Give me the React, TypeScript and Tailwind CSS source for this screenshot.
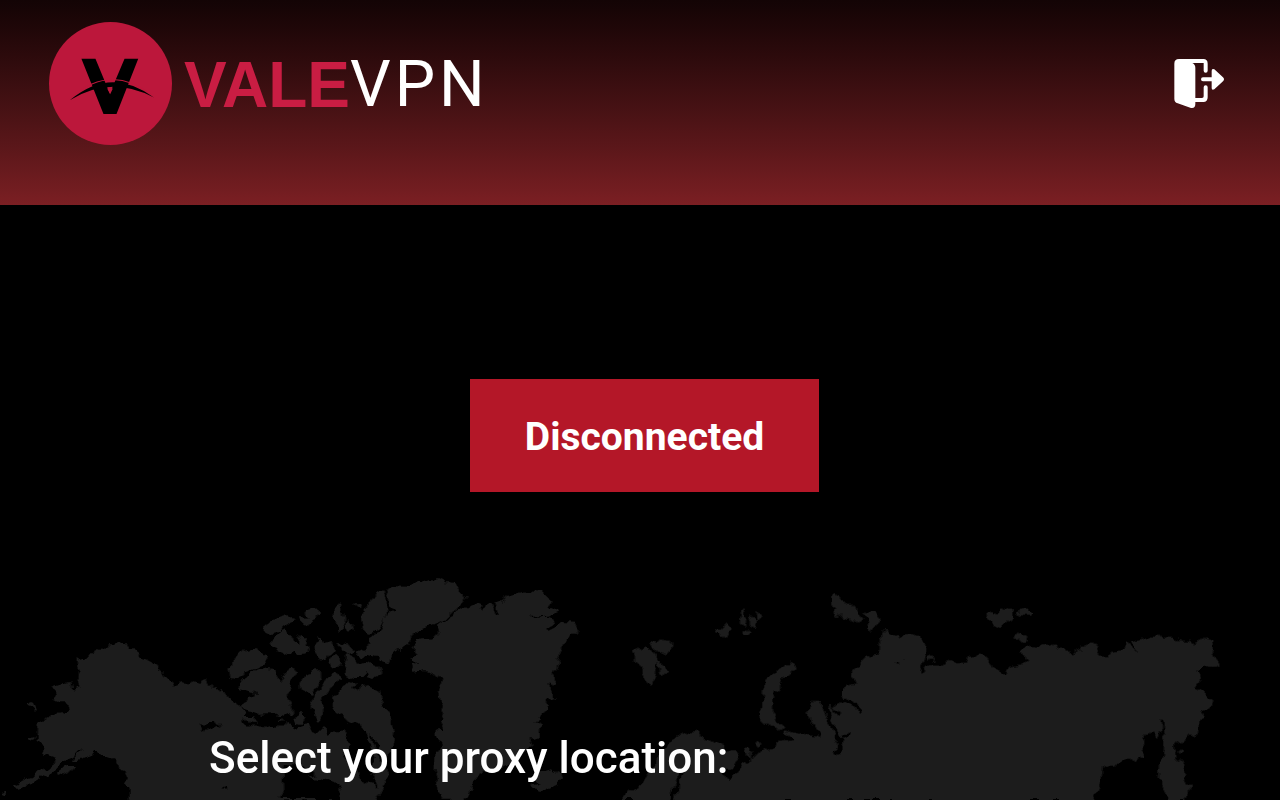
import React, { useState } from 'react';

const LogoMark: React.FC = () => (
    <svg viewBox="0 0 368 368" className="w-[123px] h-[123px] shrink-0" aria-hidden="true">
        <circle cx="184" cy="184" r="184" fill="#bc173b" />
        <path d="M97 110H139L182 214L226 110H267L202 275H163Z" fill="#000" />
        <path d="M66 226Q186 122 306 218" fill="none" stroke="#bc173b" strokeWidth="3" />
        <path d="M62 234Q186 130 314 226Q186 158 62 234Z" fill="#000" />
        <path d="M174 199H191L183 216Z" fill="#bc173b" />
    </svg>
);

const LogoutIcon: React.FC = () => (
    <svg viewBox="72 57 150 150" className="w-[50px] h-[50px]" fill="#fff" aria-hidden="true">
        <path d="M87 57H160Q173 57 173 71V92Q173 98 167 98Q161 98 161 92V69H127Q136 73 136 84V174H156Q161 174 161 169V142Q161 136 167 136Q173 136 173 142V172Q173 186 160 186H136V192Q136 206 123 204L83 190Q73 187 73 176V71Q73 57 87 57Z" />
        <path d="M159 112H185V93Q185 84 193 88L219 112Q225 118 219 124L193 148Q185 152 185 144V124H159Q153 124 153 118Q153 112 159 112Z" />
    </svg>
);

const WorldMap: React.FC = () => (
    <svg
        viewBox="0 0 3840 720"
        className="col-start-1 row-start-1 w-full"
        fill="#1c1c1c"
        stroke="#1c1c1c"
        strokeWidth="4"
        strokeLinejoin="round"
        aria-hidden="true"
    >
        {/* roughens the coastlines */}
        <filter id="coast" x="0" y="0" width="3840" height="720" filterUnits="userSpaceOnUse">
            <feTurbulence type="fractalNoise" baseFrequency="0.03" numOctaves="2" seed="4" result="noise" />
            <feDisplacementMap in="SourceGraphic" in2="noise" scale="32" xChannelSelector="R" yChannelSelector="G" />
        </filter>
        <g filter="url(#coast)">
            {/* Alaska and northern Canada */}
            <g transform="translate(0 180)">
                <path d="M40 498L75 480L110 468L140 445L172 418L150 410L128 402L137 378L112 365L113 322L130 305L155 283L185 282L208 268L203 248L180 248L160 237L172 220L161 203L185 192L212 188L218 208L240 200L235 180L242 165L233 135L232 118L250 112L280 110L300 92L330 80L350 74L370 78L386 71L400 88L412 100L410 112L435 120L450 137L480 150L500 170L515 182L522 200L545 192L570 197L580 189L600 194L610 186L625 182L635 200L630 210L648 206L652 220L670 212L690 240L715 258L735 275L728 290L760 290L775 310L790 313L815 330L850 300L890 325L925 315L945 345L980 310L1020 340L1080 280L1100 310L1120 380L1165 460L1175 545H845L860 500L895 475L950 460L905 440H845L850 545H392L390 505L375 495L382 475L370 450L355 430L330 410L300 402L285 388L270 402L240 418L215 425L262 375L240 388L218 410L185 425L160 455L130 472L95 490L50 502Z" />
                <path d="M178 460L200 444L216 442L205 455L182 466ZM88 250L98 248L108 270L96 260ZM86 357L102 354L98 361ZM4 520L18 514L10 524Z" />
                <path d="M590 307L650 306L665 322L640 330L625 325L605 340L610 322ZM662 510L680 500L690 508Z" fill="#050505" stroke="none" />
            </g>

            {/* Arctic archipelago */}
            <g transform="translate(630 30)">
                <path d="M60 323L54 292L85 265L105 240L135 235L148 248L165 257L168 278L130 295L100 303L85 325Z" />
                <path d="M92 352L105 322L150 295L190 303L205 338L225 310L245 295L262 302L240 338L230 380L245 425L225 438L200 434L178 430L150 432L120 420L92 410L115 382L145 378L135 365Z" />
                <path d="M160 175L185 155L240 140L248 150L215 175L200 185L170 187ZM175 220L205 190L225 180L245 195L250 220L262 222L275 190L285 200L280 220L298 235L295 250L270 254L250 240L225 256L200 245L205 232ZM272 155L268 140L298 142L292 125L320 118L325 135L305 145L285 165Z" />
                <path d="M270 340L290 310L328 302L330 325L318 345L305 375L290 370L275 360ZM335 355L350 325L375 308L395 325L370 340L355 365L335 385L340 430L320 450L300 410L315 375Z" />
                <path d="M375 120L385 108L400 130L405 155L395 180L380 180L380 150L368 145ZM315 220L325 205L345 220L370 215L375 240L350 262L340 272L328 255L320 240ZM415 150L430 160L432 180L415 190L408 170ZM390 215L410 220L430 245L415 255L395 240ZM360 270L375 260L388 272L385 288L368 290ZM435 102L447 101L445 110Z" />
                <path d="M400 290L410 258L430 265L440 280L470 275L500 290L512 310L495 325L465 318L440 320L415 308Z" />
                <path d="M455 155L460 115L485 95L500 65L520 70L522 100L530 120L525 145L505 175L480 190L462 185Z" />
                <path d="M535 85L530 60L560 48L600 50L625 35L655 38L680 26L705 38L735 40L765 80L760 98L735 120L690 150L640 170L610 190L590 220L550 248L535 275L505 265L480 262L440 250L470 238L490 220L480 205L515 180L535 130L565 118L540 105Z" />
                <path d="M365 390L380 370L405 350L420 335L445 350L430 375L448 350L475 348L505 360L510 390L520 410L545 440L555 480L548 540L525 560L510 530L490 500L470 470L450 455L425 460L405 440L380 425Z" />
                <path d="M255 440L275 430L290 445L280 460L262 458Z" />
            </g>
            <g transform="translate(630 30)" fill="#000" stroke="none">
                <path d="M400 470L440 450L470 490L490 560L480 600L500 650L470 640L440 600L400 560L420 520ZM340 420L370 440L375 470L350 495L335 470ZM210 690L222 650L265 615L330 625L385 640L395 690ZM500 690L540 600L560 560L660 560V690Z" />
            </g>

            {/* Greenland and Iceland */}
            <g transform="translate(1200 30)">
                <path d="M35 230L50 212L105 205L120 190L112 165L150 140L175 125L235 100L245 105L252 130L262 100L275 105L290 138L300 140L288 105L305 98L320 82L355 72L385 62L425 68L440 82L455 95L450 108L475 125L440 135L395 138L390 148L430 142L455 146L460 160L435 175L445 185L470 172L490 158L522 160L530 177L510 200L490 215L478 245L470 265L468 290L460 310L467 335L455 345L440 340L455 370L462 385L440 392L445 408L425 425L415 440L400 430L415 452L400 455L420 470L415 500L400 505L385 500L395 520L370 540L340 570L300 595L250 605L225 625L215 655L190 690H128L115 650L105 600L108 555L125 525L110 500L108 480L130 478L118 455L138 450L120 425L128 395L122 370L125 330L105 308L75 298L40 303L35 285L60 278L35 265L55 252Z" />
                <path d="M395 645L430 640L405 625L415 610L455 600L480 615L482 632L460 645L430 658L405 652Z" />
            </g>

            {/* Svalbard, Franz Josef Land, Novaya Zemlya, Scandinavia */}
            <g transform="translate(1860 60)">
                <path d="M38 212L50 205L65 210L75 198L90 212L112 240L105 270L95 312L82 300L68 280L65 260L45 245ZM92 185L112 190L120 180L150 184L162 190L155 210L135 222L115 215L98 205ZM115 240L130 255L135 270L150 272L142 282L125 285Z" />
                <path d="M285 155L292 145L308 146L322 135L330 145L320 165L308 170L300 158ZM358 130L362 95L366 90L370 115L380 125L375 135L360 138ZM395 120L402 112L412 125L405 142L393 138ZM412 97L420 95L425 108L415 118ZM368 155L380 144L390 152L378 160Z" />
                <path d="M632 50L645 40L665 60L680 78L710 80L725 118L715 125L690 120L665 105L650 112L642 100L648 90L634 80ZM736 95L760 98L780 118L765 130L752 150L742 130Z" />
                <path d="M498 262L515 242L528 260L515 275L490 295L470 325L458 355L457 400L470 425L488 440L470 447L440 435L422 420L428 390L430 330L440 300L460 280Z" />
                <path d="M5 660L45 630L75 600L100 560L130 510L160 478L190 460L210 465L235 462L245 475L280 485L310 500L340 515L350 540L335 565L310 565L300 590L325 605L345 590L370 560L385 540L405 535L425 515L450 505L480 490L525 485L520 475L490 450L530 458L560 465L605 478L575 430L568 400L575 365L605 365L615 400L635 440L655 470L660 520L640 525L670 515L672 480L640 425L625 380L645 400L640 380L665 360L680 370L715 400L722 390L665 345L670 330L715 310L695 290L700 270L745 225L780 220V660Z" />
                <path d="M375 505L390 505L398 520L380 535ZM408 490L415 478L425 488L415 498Z" />
            </g>

            {/* Siberia */}
            <g transform="translate(2460 60)">
                <path d="M98 285L120 255L150 222L175 220L185 200L182 160L195 148L208 160L230 165L240 180L250 165L270 162L295 172L310 185L320 210L310 245L300 285L315 278L320 262L340 252L365 252L390 245L410 258L440 255L445 230L480 226L500 236L520 265L555 288L565 262L610 255L620 240L605 215L620 200L665 202L680 192L700 195L715 208L730 213L755 213L762 225L780 217L805 216V660H75L60 520L72 480L90 470L70 460L55 480L40 420L30 380L60 400L45 375L70 360L110 390L118 400L118 382L80 355L65 340L85 320L120 312Z" />
                <path d="M498 98L510 92L530 100L542 86L560 95L575 90L580 108L562 120L540 142L520 135L500 115ZM595 97L620 90L637 96L630 105L605 104ZM582 172L595 160L615 170L610 178L588 180ZM325 230L335 226L340 236L328 240Z" />
                <path d="M222 255L235 248L240 256L230 264ZM244 234L256 230L256 240Z" fill="#000" />
            </g>
            <g transform="translate(3120 120)">
                <path d="M0 138L30 130L48 140L50 150L75 150L95 165L115 148L145 138L165 145L182 172L205 170L220 158L255 150L262 132L300 162L278 125L310 118L330 108L365 110L400 118L450 122L470 140L478 120L495 116L518 124L520 150L512 160L522 178L535 195L510 202L490 195L475 210L458 200L472 220L476 245L462 264L480 272L500 292L518 318L490 330L475 360L465 410L445 402L425 420L400 430L405 480L420 490L440 520L432 540L445 565L435 600H385L372 570L358 535L362 490L370 465L378 405L370 362L360 362L362 395L352 415L340 395L315 400L305 420L303 455L310 468L285 485L270 470L240 485L205 490L185 500L178 550L160 600H0Z" />
                <path d="M414 455L422 450L424 460L416 462Z" />
            </g>

            {/* inlets and river mouths */}
            <g fill="none" stroke="#000" strokeWidth="11" strokeLinecap="round">
                <path d="M2022 715L2028 680L2048 640" />
                <path d="M2470 430L2484 470L2500 510L2520 545L2518 575L2502 584M2520 420L2540 415L2572 440L2578 455M2500 450L2515 460M2530 528L2552 522" />
                <path d="M730 485L790 495L860 490M1100 340L1060 390" />
            </g>
        </g>
    </svg>
);

export default function App() {
    const [connected, setConnected] = useState(false);

    return (
        <div className="min-h-screen overflow-hidden bg-black font-['Roboto',sans-serif] text-white">
            <header className="flex items-center justify-between bg-linear-to-b from-[#130405] to-[#7b1f23] pt-[22px] pb-[60px] pl-[49px] pr-14">
                <div className="flex items-center gap-3">
                    <LogoMark />
                    <div className="flex items-center pt-0.5 text-[64px] leading-none">
                        <span className="font-['Liberation_Sans',sans-serif] font-bold text-[#c91d43]">VALE</span>
                        <span className="flex gap-1">
                            <span>V</span>
                            <span>P</span>
                            <span>N</span>
                        </span>
                    </div>
                </div>
                <button type="button" aria-label="Log out">
                    <LogoutIcon />
                </button>
            </header>

            <main>
                <div className="flex justify-center pt-[174px] pb-[68px] pl-[209px] pr-[200px]">
                    <button
                        type="button"
                        className="h-[113px] w-[349px] bg-[#b41728] pt-1 text-[39px] font-bold"
                        onClick={() => setConnected(c => !c)}
                    >
                        {connected ? 'Connected' : 'Disconnected'}
                    </button>
                </div>
                <section className="grid">
                    <WorldMap />
                    <h2 className="col-start-1 row-start-1 self-end pb-4 pl-[209px] pr-[200px] text-[44px] leading-[52px] font-medium">
                        Select your proxy location:
                    </h2>
                </section>
            </main>
        </div>
    );
}
